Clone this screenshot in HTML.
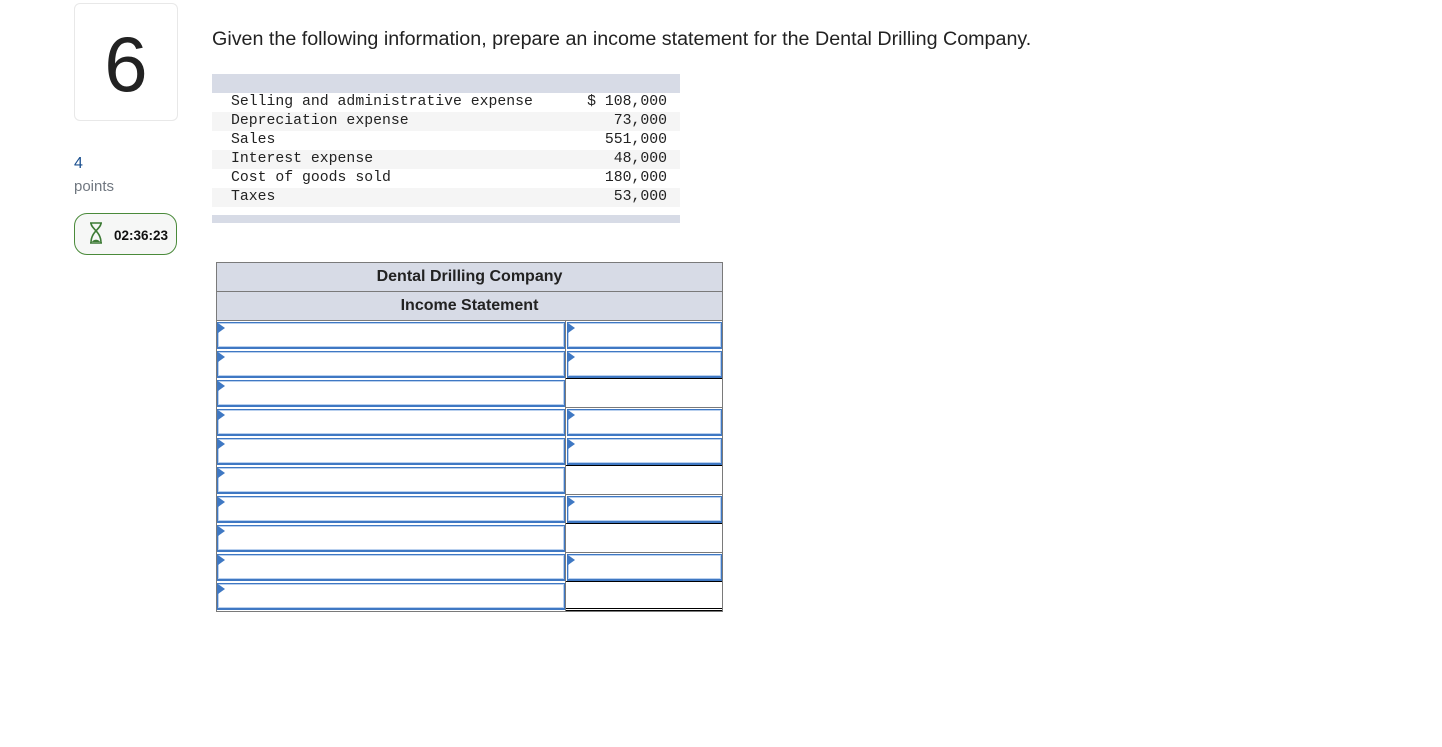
<!DOCTYPE html>
<html><head><style>
body{margin:0;background:#fff;width:1442px;height:747px;position:relative;font-family:"Liberation Sans",sans-serif;overflow:hidden}
.abs{position:absolute}
.num{left:74px;top:3px;width:102px;height:116px;border:1px solid #e8e8e8;border-radius:6px;font-size:78px;color:#222;text-align:center;line-height:120px}
.pts{left:74px;top:155px;color:#1a4f8f;font-size:16px}
.ptl{left:74px;top:178px;color:#707780;font-size:15px}
.timer{left:74px;top:213px;width:101px;height:40px;border:1px solid #4a8a3a;border-radius:13px;background:#f6f7f6}
.timer span{position:absolute;left:39px;top:14px;font-weight:bold;font-size:13.5px;color:#111}
.q{left:212px;top:28px;font-size:19.7px;color:#222}
.dt{left:212px;top:74px;width:468px}
.band{height:19px;background:#d7dbe6}
.r{height:19px;font-family:"Liberation Mono",monospace;font-size:14.8px;line-height:19px;color:#222;position:relative}
.r b{font-weight:normal;position:absolute;left:19px}
.r i{font-style:normal;position:absolute;right:13px}
.tb{left:216px;top:262px;width:505px;border:1px solid #7a7a7a;border-bottom:none}
.h{height:28px;background:#d7dbe6;text-align:center;font-weight:bold;font-size:16px;line-height:28px;color:#222;border-bottom:1px solid #7a7a7a}
.row{height:29px;position:relative}
.in{position:absolute;top:1px;height:24px;border:1px solid #3f78c3;border-bottom:2px solid #3f78c3;box-shadow:inset 0 0 0 1px #b9d0ee;background:#fff}
.in:before{content:"";position:absolute;left:0;top:0;border-left:7px solid #3f78c3;border-top:5px solid transparent;border-bottom:5px solid transparent}
.L{left:0;width:346px}
.R{left:350px;width:153px}
.sep{position:absolute;left:348px;top:0;bottom:0;width:1px;background:#7a7a7a}
.bl{position:absolute;left:349px;right:0;bottom:0;height:1px;background:#000}
</style></head><body>
<div class="abs num">6</div>
<div class="abs pts">4</div>
<div class="abs ptl">points</div>
<div class="abs timer"><svg class="abs" style="left:13px;top:7px" width="16" height="24" viewBox="0 0 16 24"><path d="M2 2h12M2 22h12M3 2c0 6 10 8 10 20M13 2c0 6-10 8-10 20" stroke="#3c7a34" stroke-width="1.6" fill="none"/><path d="M4 21c1-3 7-3 8 0z" fill="#3c7a34"/></svg><span>02:36:23</span></div>
<div class="abs q">Given the following information, prepare an income statement for the Dental Drilling Company.</div>
<div class="abs dt">
<div class="band"></div>
<div>
<div class="r" style="background:#fff"><b>Selling and administrative expense</b><i>$ 108,000</i></div>
<div class="r" style="background:#f5f5f5"><b>Depreciation expense</b><i>73,000</i></div>
<div class="r" style="background:#fff"><b>Sales</b><i>551,000</i></div>
<div class="r" style="background:#f5f5f5"><b>Interest expense</b><i>48,000</i></div>
<div class="r" style="background:#fff"><b>Cost of goods sold</b><i>180,000</i></div>
<div class="r" style="background:#f5f5f5"><b>Taxes</b><i>53,000</i></div>
</div>
<div style="height:8px"></div>
<div class="band" style="height:8px"></div>
</div>
<div class="abs tb">
<div class="h">Dental Drilling Company</div>
<div class="h">Income Statement</div>
<div class="row"><div class="sep"></div><div class="in L"></div><div class="in R"></div></div>
<div class="row"><div class="sep"></div><div class="in L"></div><div class="in R"></div><div class="bl"></div></div>
<div class="row"><div class="sep"></div><div class="in L"></div><div class="bl" style="background:#7a7a7a"></div></div>
<div class="row"><div class="sep"></div><div class="in L"></div><div class="in R"></div></div>
<div class="row"><div class="sep"></div><div class="in L"></div><div class="in R"></div><div class="bl"></div></div>
<div class="row"><div class="sep"></div><div class="in L"></div><div class="bl" style="background:#7a7a7a"></div></div>
<div class="row"><div class="sep"></div><div class="in L"></div><div class="in R"></div><div class="bl"></div></div>
<div class="row"><div class="sep"></div><div class="in L"></div><div class="bl" style="background:#7a7a7a"></div></div>
<div class="row"><div class="sep"></div><div class="in L"></div><div class="in R"></div><div class="bl"></div></div>
<div class="row" style="border-bottom:1px solid #7a7a7a"><div class="sep"></div><div class="in L"></div><div class="bl" style="bottom:2px"></div><div class="bl"></div></div>
</div>
</body></html>
